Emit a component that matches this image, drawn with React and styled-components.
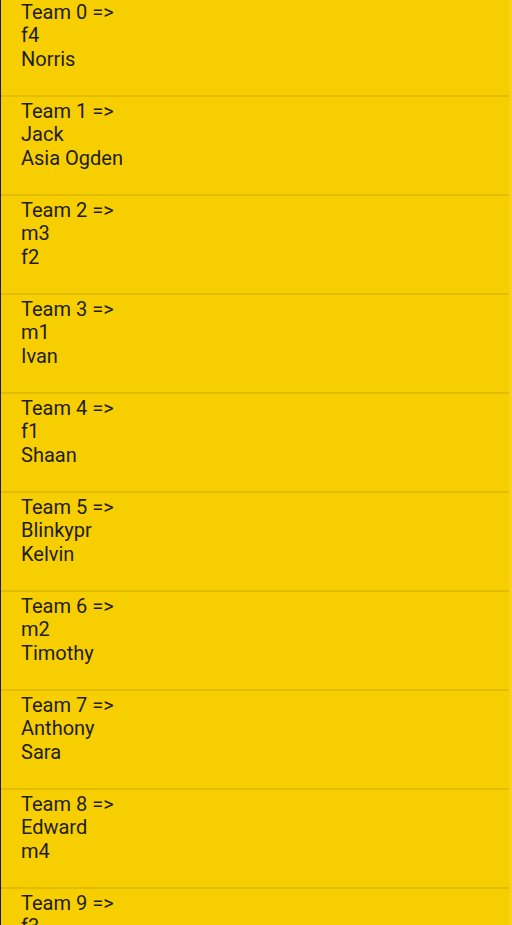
import React from "react";
import styled, { createGlobalStyle } from "styled-components";

const GlobalStyle = createGlobalStyle`
  html, body {
    margin: 0;
    padding: 0;
    background-color: #f7ce00;
  }
  body {
    font-family: Roboto, "Liberation Sans", sans-serif;
  }
`;

const teams = [
  ["f4", "Norris"],
  ["Jack", "Asia Ogden"],
  ["m3", "f2"],
  ["m1", "Ivan"],
  ["f1", "Shaan"],
  ["Blinkypr", "Kelvin"],
  ["m2", "Timothy"],
  ["Anthony", "Sara"],
  ["Edward", "m4"],
  ["f3", "Lucy"],
];

const List = styled.div`
  display: flex;
  flex-direction: column;
  height: 925px;
  overflow: hidden;
  border-left: 1px solid #1a1a1a;
  border-right: 3px solid #f9d21a;
  background-color: #f7ce00;
`;

const Card = styled.div`
  flex: 0 0 auto;
  height: 94px;
  box-sizing: content-box;
  padding: 1px 20px 0;
  margin-bottom: 2px;
  border-bottom: 2px solid #e2bc00;
  color: #1e1e1e;
  font-size: 20px;
`;

const Line = styled.div`
  line-height: 23.4px;
`;

const App = () => {
  return (
    <>
      <GlobalStyle />
      <List>
        {teams.map((members, i) => (
          <Card key={i}>
            <Line>Team {i} =&gt;</Line>
            {members.map((m) => (
              <Line key={m}>{m}</Line>
            ))}
          </Card>
        ))}
      </List>
    </>
  );
};

export default App;
